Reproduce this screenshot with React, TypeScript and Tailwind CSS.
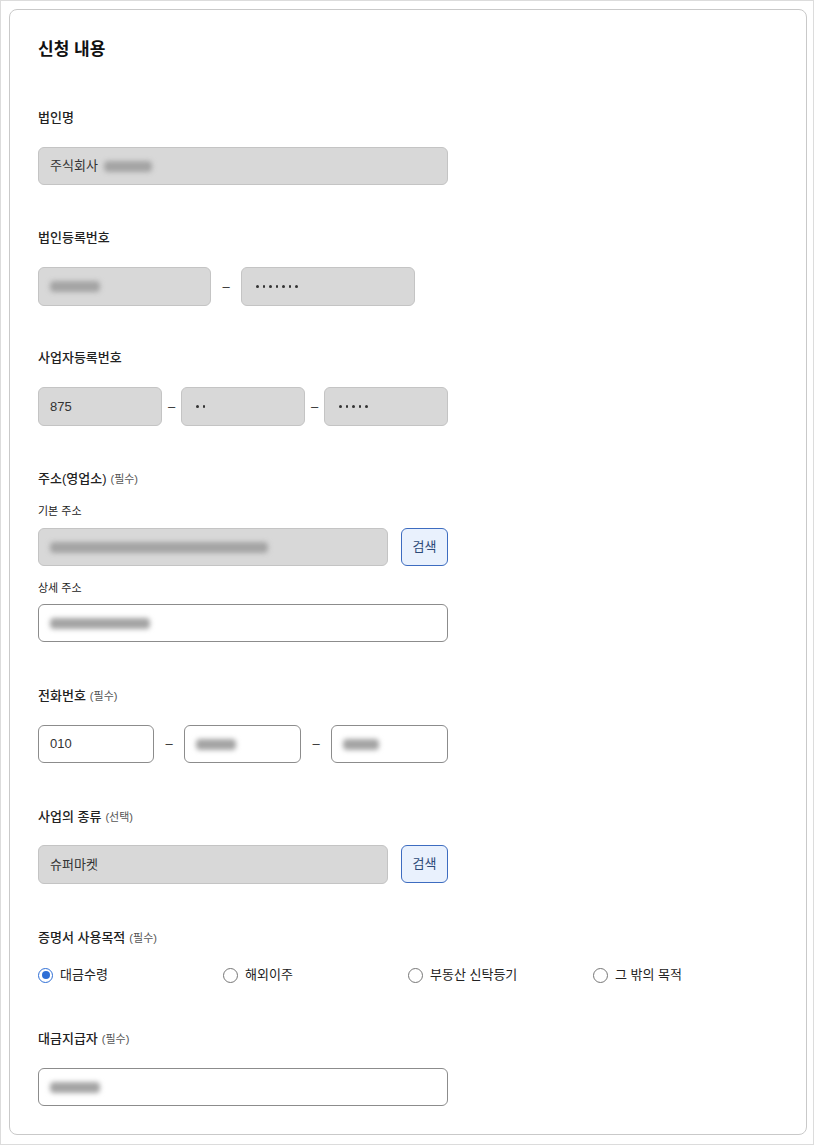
import React from 'react';

const grayInput = 'h-[38px] rounded-md border border-[#c4c4c4] bg-[#d8d8d8] flex items-center px-[11px] text-[13px] text-[#333]';
const whiteInput = 'h-[38px] rounded-md border border-[#8c8c8c] bg-white flex items-center px-[11px] text-[13px] text-[#333]';

function Label({ text, note, className = '' }: { text: string; note?: string; className?: string }) {
  return (
    <div className={`h-[20px] leading-[20px] text-[13px] font-medium text-[#222] ${className}`}>
      {text}
      {note && <span className="ml-1 text-[11px] font-normal text-[#555]">{note}</span>}
    </div>
  );
}

function Blur({ w }: { w: number }) {
  // masked value, shown as a soft grey smear
  return <span className="inline-block h-[11px] rounded-sm bg-[#a4a4a4] blur-[2.5px]" style={{ width: w }} />;
}

function Dots({ n }: { n: number }) {
  return (
    <span className="flex gap-[4px]">
      {Array.from({ length: n }).map((_, i) => (
        <span key={i} className="h-[2.5px] w-[2.5px] rounded-full bg-[#333]" />
      ))}
    </span>
  );
}

function Dash({ w }: { w: number }) {
  return (
    <div className="flex items-center justify-center text-[13px] text-[#333]" style={{ width: w }}>
      –
    </div>
  );
}

function SearchButton() {
  return (
    <button className="h-[38px] w-[47px] shrink-0 rounded-md border border-[#3d6cc0] bg-[#e9f1fd] text-[13px] text-[#2d4a78]">
      검색
    </button>
  );
}

function Radio({ label, checked }: { label: string; checked?: boolean }) {
  return (
    <div className="flex w-[185px] items-center gap-[7px] text-[13px] text-[#222]">
      {checked ? (
        <span className="flex h-[15px] w-[15px] items-center justify-center rounded-full border border-[#2f6fd6] bg-white">
          <span className="h-[8px] w-[8px] rounded-full bg-[#2f6fd6]" />
        </span>
      ) : (
        <span className="h-[15px] w-[15px] rounded-full border border-[#777] bg-white" />
      )}
      {label}
    </div>
  );
}

export default function App() {
  return (
    <div className="h-[1145px] w-[814px] border border-[#dcdcdc] bg-white pt-2 pl-2 pr-[6px] font-['Liberation_Sans','Noto_Sans_CJK_KR',sans-serif]">
      <div className="rounded-lg border border-[#c9c9c9] bg-white px-[28px] pt-[27px] pb-[28px]">
        <h2 className="h-[26px] text-[17px] font-bold leading-[26px] text-[#111]">신청 내용</h2>

        {/* 법인명 */}
        <Label text="법인명" className="mt-[45px]" />
        <div className={`mt-[19px] w-[410px] gap-[6px] ${grayInput}`}>
          주식회사 <Blur w={48} />
        </div>

        {/* 법인등록번호 */}
        <Label text="법인등록번호" className="mt-[43px]" />
        <div className="mt-[19px] flex h-[39px]">
          <div className={`h-[39px] w-[173px] ${grayInput}`}>
            <Blur w={50} />
          </div>
          <Dash w={30} />
          <div className={`h-[39px] w-[174px] ${grayInput} pl-[14px]`}>
            <Dots n={7} />
          </div>
        </div>

        {/* 사업자등록번호 */}
        <Label text="사업자등록번호" className="mt-[42px]" />
        <div className="mt-[19px] flex h-[39px] w-[410px]">
          <div className={`h-[39px] w-[124px] ${grayInput}`}>875</div>
          <Dash w={19} />
          <div className={`h-[39px] w-[124px] ${grayInput} pl-[14px]`}>
            <Dots n={2} />
          </div>
          <Dash w={19} />
          <div className={`h-[39px] w-[124px] ${grayInput} pl-[14px]`}>
            <Dots n={5} />
          </div>
        </div>

        {/* 주소 */}
        <Label text="주소(영업소)" note="(필수)" className="mt-[43px]" />
        <div className="mt-[14px] h-[16px] text-[11px] leading-[16px] text-[#222]">기본 주소</div>
        <div className="mt-[9px] flex w-[410px] gap-[13px]">
          <div className={`w-[350px] ${grayInput}`}>
            <Blur w={218} />
          </div>
          <SearchButton />
        </div>
        <div className="mt-[14px] h-[16px] text-[11px] leading-[16px] text-[#222]">상세 주소</div>
        <div className={`mt-[8px] w-[410px] ${whiteInput}`}>
          <Blur w={100} />
        </div>

        {/* 전화번호 */}
        <Label text="전화번호" note="(필수)" className="mt-[44px]" />
        <div className="mt-[19px] flex w-[410px]">
          <div className={`w-[116px] ${whiteInput}`}>010</div>
          <Dash w={30} />
          <div className={`w-[117px] ${whiteInput}`}>
            <Blur w={40} />
          </div>
          <Dash w={30} />
          <div className={`w-[117px] ${whiteInput}`}>
            <Blur w={36} />
          </div>
        </div>

        {/* 사업의 종류 */}
        <Label text="사업의 종류" note="(선택)" className="mt-[44px]" />
        <div className="mt-[18px] flex w-[410px] gap-[13px]">
          <div className={`h-[39px] w-[350px] ${grayInput}`}>슈퍼마켓</div>
          <SearchButton />
        </div>

        {/* 증명서 사용목적 */}
        <Label text="증명서 사용목적" note="(필수)" className="mt-[44px]" />
        <div className="mt-[17px] flex h-[20px] items-center">
          <Radio label="대금수령" checked />
          <Radio label="해외이주" />
          <Radio label="부동산 신탁등기" />
          <Radio label="그 밖의 목적" />
        </div>

        {/* 대금지급자 */}
        <Label text="대금지급자" note="(필수)" className="mt-[44px]" />
        <div className={`mt-[19px] w-[410px] ${whiteInput}`}>
          <Blur w={50} />
        </div>
      </div>
    </div>
  );
}
